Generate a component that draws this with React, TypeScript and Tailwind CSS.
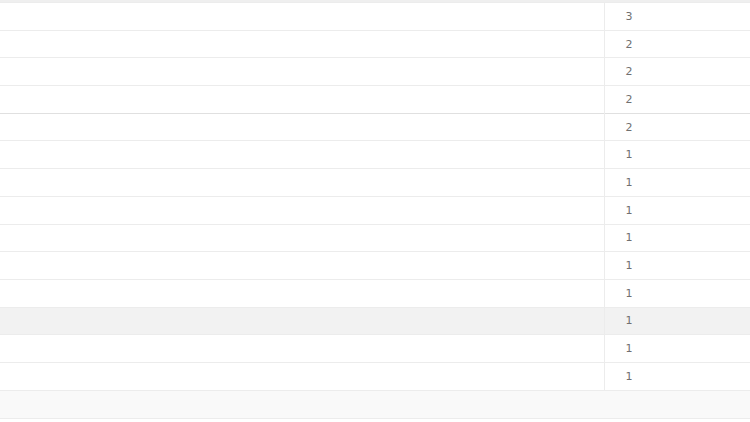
const counts = [3, 2, 2, 2, 2, 1, 1, 1, 1, 1, 1, 1, 1, 1];

export default function App() {
  return (
    <div className="h-[422px] w-[750px] overflow-hidden bg-white font-['DejaVu_Sans',Verdana,sans-serif]">
      <div className="h-[2px] bg-[#efefef]" />
      <table className="w-full border-collapse">
        <tbody>
          {counts.map((n, i) => (
            <tr key={i} className={i === 11 ? 'bg-[#f2f2f2]' : 'bg-white'}>
              <td
                className={`h-[27.7px] w-[604px] border-t p-0 ${i === 4 ? 'border-[#e0e0e0]' : 'border-[#ececec]'}`}
              />
              <td
                className={`h-[27.7px] border-t border-l p-0 pl-[21px] text-[11px] leading-none text-[#707070] ${i === 4 ? 'border-t-[#e0e0e0] border-l-[#ececec]' : 'border-[#ececec]'}`}
              >
                {n}
              </td>
            </tr>
          ))}
        </tbody>
      </table>
      <div className="h-[29px] border-y border-[#ececec] bg-[#f9f9f9]" />
    </div>
  );
}
